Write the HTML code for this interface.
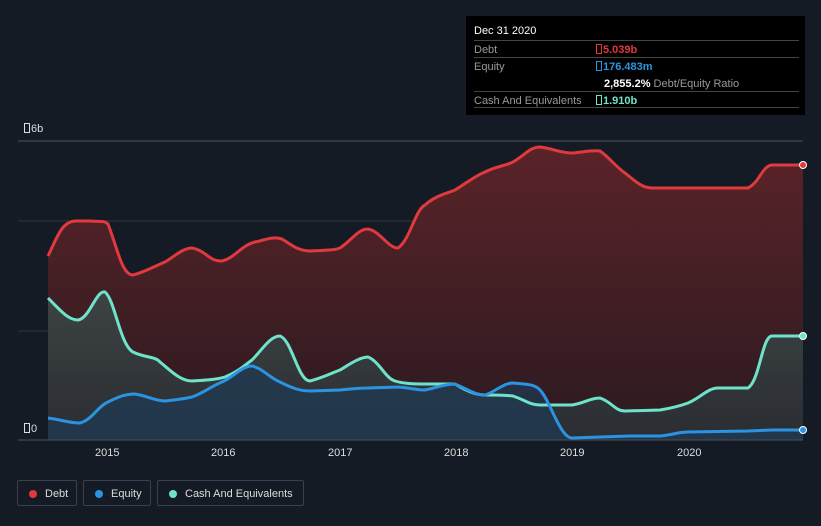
<!DOCTYPE html>
<html><head><style>
body{margin:0;width:821px;height:526px;background:#151b25;font-family:"Liberation Sans",sans-serif;overflow:hidden;position:relative}
.tt{position:absolute;left:466px;top:16px;width:339px;height:99px;background:#000;color:#fff;font-size:11px}
.row{position:absolute;left:8px;right:6px;border-top:1px solid #444;height:17px}
.l{position:absolute;left:0;top:3px;color:#999}
.v{position:absolute;left:122px;top:3px;font-weight:bold}
.bx{display:inline-block;width:4px;height:8px;border:1px solid currentColor;margin-right:1px;vertical-align:-1px}
.ax{position:absolute;color:#ddd;font-size:11px}
.lg{position:absolute;top:480px;height:26px;border:1px solid #3a404c;border-radius:2px;color:#ddd;font-size:11px;line-height:26px;box-sizing:border-box;padding-left:27px}
.lg i{position:absolute;left:11px;top:9px;width:8px;height:8px;border-radius:50%}
</style></head><body>
<svg width="821" height="526" style="position:absolute;left:0;top:0">
<defs>
<linearGradient id="dg" x1="0" y1="0" x2="0" y2="1"><stop offset="0" stop-color="#5a2328"/><stop offset="1" stop-color="#2a1a20"/></linearGradient>
<linearGradient id="cg" x1="0" y1="0" x2="0" y2="1"><stop offset="0" stop-color="#3c4a48"/><stop offset="1" stop-color="#2a3036"/></linearGradient>
</defs>
<g stroke="#2e333d" stroke-width="1"><line x1="18" y1="221" x2="803" y2="221"/><line x1="18" y1="331" x2="803" y2="331"/></g>
<path d="M48,256 C58,235 62,222 75,221 L90,221 C100,222 104,220 108,224 C118,250 122,275 133,275 C145,272 155,266 165,262 C175,256 183,248 192,248 C205,250 210,262 222,261 C235,258 240,246 255,242 C265,240 272,236 282,239 C292,245 298,251 310,251 C322,250 332,251 340,248 C352,240 358,229 368,229 C380,231 388,248 398,248 C410,240 415,210 425,205 C435,196 445,194 455,190 C468,182 475,176 485,172 C497,166 505,166 513,162 C525,155 530,147 540,147 C555,149 560,153 572,153 C585,152 590,150 600,151 C610,158 615,166 625,173 C635,181 642,188 652,188 L748,188 C760,182 762,166 772,165 L803,165 L803,440 L48,440 Z" fill="url(#dg)"/>
<path d="M48,298 C60,310 68,320 78,320 C90,318 96,290 105,292 C115,300 120,345 133,352 C145,358 155,356 160,362 C170,370 180,381 192,381 C205,380 215,380 225,377 C238,372 245,365 252,360 C262,350 270,336 280,336 C292,340 298,381 310,381 C322,378 332,373 340,370 C350,364 360,357 368,357 C380,362 385,378 395,381 C405,384 415,384 425,384 L455,384 C465,390 475,395 485,395 C497,395 505,395 513,396 C525,400 530,405 540,405 L572,405 C585,403 590,398 600,398 C612,402 615,411 625,411 L660,410 C672,408 680,406 688,403 C700,398 708,388 718,388 L748,388 C760,380 762,336 772,336 L803,336 L803,440 L48,440 Z" fill="url(#cg)" opacity="0.85"/>
<path d="M48,418 C62,420 70,423 80,423 C92,420 98,406 108,402 C118,397 125,394 135,394 C148,396 155,401 165,401 C175,400 183,399 192,397 C203,393 212,386 222,382 C232,378 242,366 252,366 C262,368 270,378 280,382 C292,388 300,391 310,391 L340,390 C350,389 360,388 368,388 L398,387 C410,388 418,390 425,390 C435,388 445,384 455,384 C465,388 475,395 485,395 C495,392 503,383 513,383 C525,384 535,384 540,390 C550,400 560,438 572,438 L600,437 L630,436 L660,436 C672,435 678,432 688,432 L748,431 L772,430 L803,430 L803,440 L48,440 Z" fill="#1f3a55" opacity="0.7"/>
<line x1="18" y1="141" x2="803" y2="141" stroke="#4a4f58"/>
<line x1="18" y1="440" x2="803" y2="440" stroke="#4a4f58"/>
<path d="M48,256 C58,235 62,222 75,221 L90,221 C100,222 104,220 108,224 C118,250 122,275 133,275 C145,272 155,266 165,262 C175,256 183,248 192,248 C205,250 210,262 222,261 C235,258 240,246 255,242 C265,240 272,236 282,239 C292,245 298,251 310,251 C322,250 332,251 340,248 C352,240 358,229 368,229 C380,231 388,248 398,248 C410,240 415,210 425,205 C435,196 445,194 455,190 C468,182 475,176 485,172 C497,166 505,166 513,162 C525,155 530,147 540,147 C555,149 560,153 572,153 C585,152 590,150 600,151 C610,158 615,166 625,173 C635,181 642,188 652,188 L748,188 C760,182 762,166 772,165 L803,165" fill="none" stroke="#e0393e" stroke-width="3"/>
<path d="M48,298 C60,310 68,320 78,320 C90,318 96,290 105,292 C115,300 120,345 133,352 C145,358 155,356 160,362 C170,370 180,381 192,381 C205,380 215,380 225,377 C238,372 245,365 252,360 C262,350 270,336 280,336 C292,340 298,381 310,381 C322,378 332,373 340,370 C350,364 360,357 368,357 C380,362 385,378 395,381 C405,384 415,384 425,384 L455,384 C465,390 475,395 485,395 C497,395 505,395 513,396 C525,400 530,405 540,405 L572,405 C585,403 590,398 600,398 C612,402 615,411 625,411 L660,410 C672,408 680,406 688,403 C700,398 708,388 718,388 L748,388 C760,380 762,336 772,336 L803,336" fill="none" stroke="#6fe3c9" stroke-width="3"/>
<path d="M48,418 C62,420 70,423 80,423 C92,420 98,406 108,402 C118,397 125,394 135,394 C148,396 155,401 165,401 C175,400 183,399 192,397 C203,393 212,386 222,382 C232,378 242,366 252,366 C262,368 270,378 280,382 C292,388 300,391 310,391 L340,390 C350,389 360,388 368,388 L398,387 C410,388 418,390 425,390 C435,388 445,384 455,384 C465,388 475,395 485,395 C495,392 503,383 513,383 C525,384 535,384 540,390 C550,400 560,438 572,438 L600,437 L630,436 L660,436 C672,435 678,432 688,432 L748,431 L772,430 L803,430" fill="none" stroke="#2b94e0" stroke-width="3"/>
<circle cx="803" cy="165" r="3.5" fill="#e0393e" stroke="#fff" stroke-width="1"/>
<circle cx="803" cy="336" r="3.5" fill="#6fe3c9" stroke="#fff" stroke-width="1"/>
<circle cx="803" cy="430" r="3.5" fill="#2b94e0" stroke="#fff" stroke-width="1"/>
</svg>
<div class="ax" style="left:24px;top:123px"><span class="bx"></span>6b</div>
<div class="ax" style="left:24px;top:423px"><span class="bx"></span>0</div>
<div class="ax" style="left:95px;top:447px">2015</div>
<div class="ax" style="left:211px;top:447px">2016</div>
<div class="ax" style="left:328px;top:447px">2017</div>
<div class="ax" style="left:444px;top:447px">2018</div>
<div class="ax" style="left:560px;top:447px">2019</div>
<div class="ax" style="left:677px;top:447px">2020</div>
<div class="tt">
<div style="position:absolute;left:8px;top:9px">Dec 31 2020</div>
<div class="row" style="top:24px"><span class="l">Debt</span><span class="v" style="color:#e0393e"><span class="bx"></span>5.039b</span></div>
<div class="row" style="top:41px;border-top-color:#444"><span class="l">Equity</span><span class="v" style="color:#2b94e0"><span class="bx"></span>176.483m</span><span style="position:absolute;left:130px;top:20px;font-weight:bold">2,855.2% <span style="font-weight:normal;color:#999">Debt/Equity Ratio</span></span></div>
<div class="row" style="top:75px"><span class="l">Cash And Equivalents</span><span class="v" style="color:#6fe3c9"><span class="bx"></span>1.910b</span></div>
<div class="row" style="top:91px;height:0"></div>
</div>
<div class="lg" style="left:17px;width:60px"><i style="background:#e0393e"></i>Debt</div>
<div class="lg" style="left:83px;width:68px"><i style="background:#2b94e0"></i>Equity</div>
<div class="lg" style="left:157px;width:147px"><i style="background:#6fe3c9"></i>Cash And Equivalents</div>
</body></html>
